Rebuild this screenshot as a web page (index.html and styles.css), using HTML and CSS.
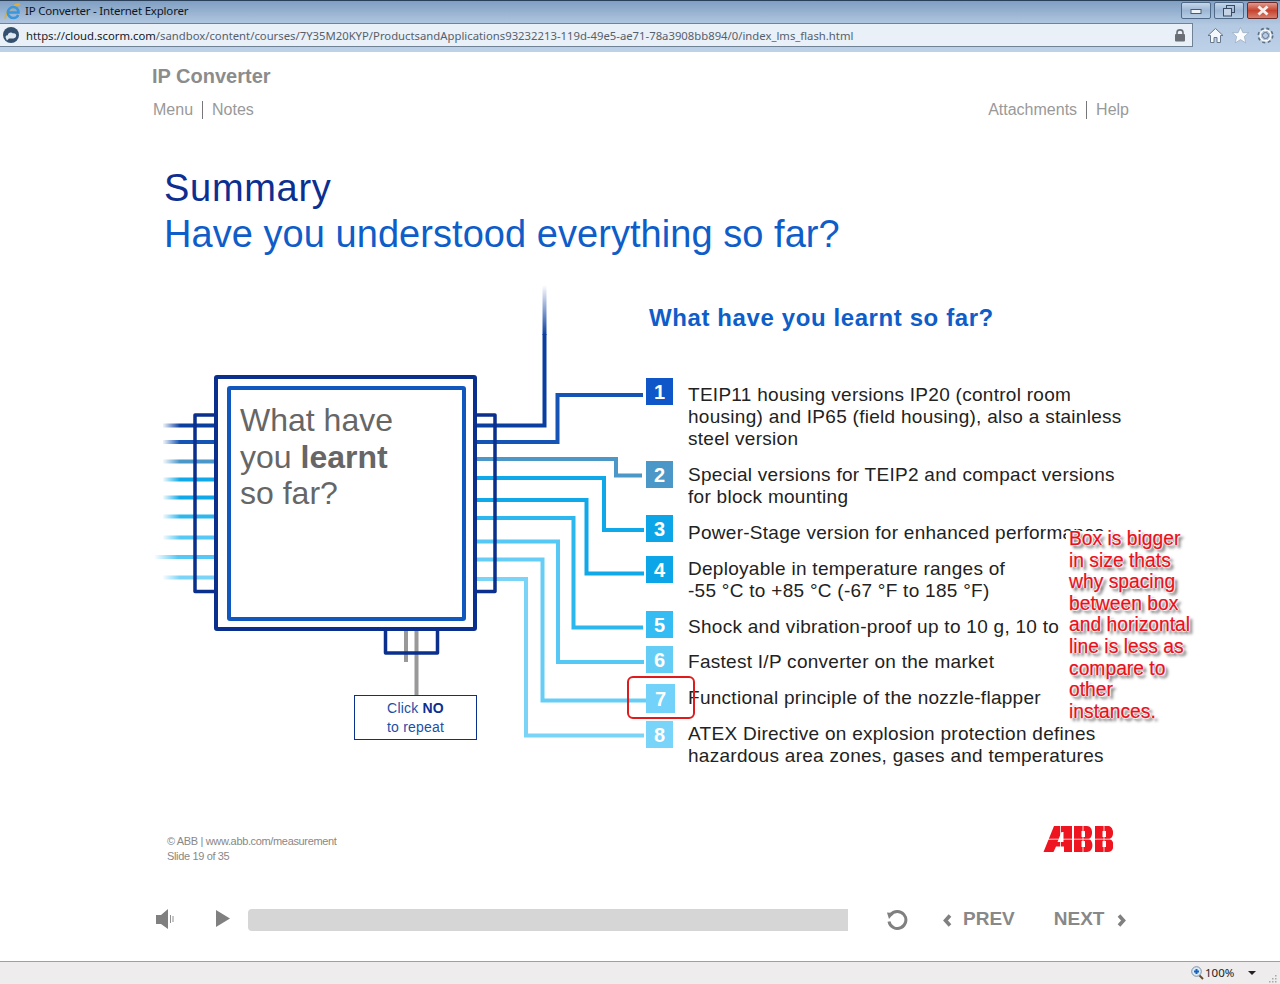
FILE: index.html
```html
<!DOCTYPE html>
<html lang="en">
<head>
    <meta charset="UTF-8">
    <meta name="viewport" content="width=device-width, initial-scale=1.0">
    <title>IP Converter - Internet Explorer</title>
    <link rel="stylesheet" href="styles.css">
</head>
<body>
    <header class="browser">
        <div class="titlebar">
            <svg class="ie-logo" width="18" height="18" viewBox="0 0 18 18">
                <path d="M1.5 15.5C0.5 11 8 2.5 16 1.5C13 0.5 11 2 10 3" fill="none" stroke="#e3ac34" stroke-width="1.8"/>
                <path d="M4.5 9.5H14.5C14.5 6 12 4 9.5 4C6.5 4 3.8 6.5 3.8 9.5C3.8 12.8 6.5 15 9.5 15C11.6 15 13.3 14 14.2 12" fill="none" stroke="#3b97dc" stroke-width="2.6"/>
            </svg>
            <span class="window-title">IP Converter - Internet Explorer</span>
            <div class="window-buttons">
                <span class="win-btn">
                    <svg width="12" height="8" viewBox="0 0 12 8"><rect x="1" y="2.5" width="10" height="4" fill="#eef3f9" stroke="#4a5a70"/></svg>
                </span>
                <span class="win-btn">
                    <svg width="14" height="12" viewBox="0 0 14 12"><rect x="4.5" y="0.5" width="8" height="7" fill="none" stroke="#3a4a60"/><rect x="1.5" y="3.5" width="8" height="7.5" fill="#c4d4e6" stroke="#3a4a60"/></svg>
                </span>
                <span class="win-btn win-close">
                    <svg width="14" height="11" viewBox="0 0 14 11"><path d="M2.5 1.5L11.5 9.5M11.5 1.5L2.5 9.5" stroke="#f6f0ee" stroke-width="3"/></svg>
                </span>
            </div>
        </div>
        <div class="addressbar">
            <div class="address-field">
                <svg class="site-icon" width="18" height="18" viewBox="0 0 18 18">
                    <circle cx="9" cy="9" r="8" fill="#33506e"/>
                    <path d="M4 12.5C2.8 10.8 4 9 5.8 9.2C6 6.5 9.5 5.5 11 7.5C13 6.8 14.8 8.5 14 10.5C13.6 12 12 12.5 10.5 12.5H7L5 14.5Z" fill="#dfe9f3"/>
                </svg>
                <span class="url"><span class="url-scheme">https://</span><span class="url-host">cloud.scorm.com</span>/sandbox/content/courses/7Y35M20KYP/ProductsandApplications93232213-119d-49e5-ae71-78a3908bb894/0/index_lms_flash.html</span>
                <svg class="lock" width="12" height="14" viewBox="0 0 12 14">
                    <path d="M3 7V4.5C3 1 9 1 9 4.5V7" fill="none" stroke="#6a6f75" stroke-width="1.6"/>
                    <rect x="1" y="6" width="10" height="7.5" rx="1" fill="#6a6f75"/>
                </svg>
            </div>
            <div class="tools">
                <svg width="17" height="17" viewBox="0 0 17 17"><path d="M8.5 1.5L16 8.5H13.5V15.5H10V10.5H7V15.5H3.5V8.5H1Z" fill="#f5f8fb" stroke="#66788c"/></svg>
                <svg width="17" height="17" viewBox="0 0 17 17"><path d="M8.5 0.5L10.9 5.7H16.6L12.3 9.6L13.7 15.8L8.5 12.6L3.3 15.8L4.7 9.6L0.4 5.7H6.1Z" fill="#fbfcfe" stroke="#8ea0b4" stroke-width="0.6"/></svg>
                <svg width="17" height="17" viewBox="0 0 17 17"><circle cx="8.5" cy="8.5" r="6.2" fill="none" stroke="#5e7085" stroke-width="3.6" stroke-dasharray="2.6 2.27"/><circle cx="8.5" cy="8.5" r="5.4" fill="none" stroke="#f5f8fb" stroke-width="1.8"/><circle cx="8.5" cy="8.5" r="3" fill="none" stroke="#5e7085"/></svg>
            </div>
        </div>
    </header>

    <main class="stage">
        <h1 class="course-title">IP Converter</h1>
        <nav class="course-nav">
            <div><a>Menu</a><i class="sep"></i><a>Notes</a></div>
            <div><a>Attachments</a><i class="sep"></i><a>Help</a></div>
        </nav>

        <div class="slide-head">
            <h2 class="slide-title">Summary</h2>
            <h3 class="slide-sub">Have you understood everything so far?</h3>
        </div>

        <!-- wires and chip, drawn in page coordinates -->
        <svg class="wires" width="1280" height="909" viewBox="0 52 1280 909" fill="none">
            <defs>
                <linearGradient id="fadeUp" gradientUnits="userSpaceOnUse" x1="0" y1="285" x2="0" y2="335">
                    <stop offset="0" stop-color="#0b3f9f" stop-opacity="0"/>
                    <stop offset="1" stop-color="#0b3f9f"/>
                </linearGradient>
                <linearGradient id="fadeLeft" gradientUnits="userSpaceOnUse" x1="162" y1="0" x2="180" y2="0">
                    <stop offset="0" stop-color="#fff" stop-opacity="1"/>
                    <stop offset="1" stop-color="#fff" stop-opacity="0"/>
                </linearGradient>
                <linearGradient id="fadeLong" gradientUnits="userSpaceOnUse" x1="154" y1="0" x2="178" y2="0">
                    <stop offset="0" stop-color="#55c8f5" stop-opacity="0"/>
                    <stop offset="1" stop-color="#55c8f5"/>
                </linearGradient>
            </defs>

            <g stroke-width="4">
                <path d="M163 425.5H214" stroke="#0b3f9f"/>
                <path d="M163 442H214" stroke="#1554b5"/>
                <path d="M163 461.5H214" stroke="#4a97c8"/>
                <path d="M163 479.5H214" stroke="#0fa8e8"/>
                <path d="M163 497.5H214" stroke="#0fa8e8"/>
                <path d="M163 516.5H214" stroke="#2cb8ee"/>
                <path d="M163 537.5H214" stroke="#55c8f5"/>
                <path d="M163 577.5H214" stroke="#7ad4f8"/>
            </g>
            <rect x="160" y="415" width="20" height="170" fill="url(#fadeLeft)"/>
            <path d="M154 557H214" stroke="url(#fadeLong)" stroke-width="4"/>

            <g stroke-width="4">
                <path d="M477 425.5H544.5V334" stroke="#0b3f9f"/>
                <path d="M544.5 285V335" stroke="url(#fadeUp)"/>
                <path d="M477 442H557.5V395H643" stroke="#1554b5"/>
                <path d="M477 459H616V475.5H642" stroke="#4a97c8"/>
                <path d="M477 478H604V530H644" stroke="#0fa8e8"/>
                <path d="M477 500H586.5V573.5H644" stroke="#0fa8e8"/>
                <path d="M477 518H573.5V627.5H643" stroke="#2cb8ee"/>
                <path d="M477 541.5H558V662H644" stroke="#55c8f5"/>
                <path d="M477 559.5H542.5V700.5H646" stroke="#66cdf7"/>
                <path d="M477 579H526V735.5H644" stroke="#7ad4f8"/>
            </g>

            <path d="M406 631V662M416.5 631V695" stroke="#999" stroke-width="4"/>

            <g stroke="#0a2f8c" stroke-width="3.5" stroke-linejoin="round">
                <path d="M214 415H195V591.5H214"/>
                <path d="M477 415H495V591.5H477"/>
                <path d="M385.5 631V653H437.5V631"/>
            </g>
            <rect x="216" y="377" width="259" height="252" fill="#fff" fill-opacity="0" stroke="#0a2f8c" stroke-width="4" rx="1"/>
            <rect x="229" y="388" width="235" height="231" stroke="#1058be" stroke-width="4" rx="1"/>
        </svg>

        <div class="chip-label">What have<br>you <b>learnt</b><br>so far?</div>
        <div class="repeat-box">Click <b>NO</b><br>to repeat</div>

        <section class="learnt">
            <h3 class="learnt-head">What have you learnt so far?</h3>
            <ol class="points">
                <li class="point"><span class="num n1">1</span><p>TEIP11 housing versions IP20 (control room<br>housing) and IP65 (field housing), also a stainless<br>steel version</p></li>
                <li class="point"><span class="num n2">2</span><p>Special versions for TEIP2 and compact versions<br>for block mounting</p></li>
                <li class="point"><span class="num n3">3</span><p>Power-Stage version for enhanced performance</p></li>
                <li class="point"><span class="num n4">4</span><p>Deployable in temperature ranges of<br>-55 °C to +85 °C (-67 °F to 185 °F)</p></li>
                <li class="point"><span class="num n5">5</span><p>Shock and vibration-proof up to 10 g, 10 to</p></li>
                <li class="point tight"><span class="num n6">6</span><p>Fastest I/P converter on the market</p></li>
                <li class="point"><span class="num n7">7</span><p>Functional principle of the nozzle-flapper</p></li>
                <li class="point"><span class="num n8">8</span><p>ATEX Directive on explosion protection defines<br>hazardous area zones, gases and temperatures</p></li>
            </ol>
        </section>

        <div class="mark"></div>
        <div class="note">Box is bigger<br>in size thats<br>why spacing<br>between box<br>and horizontal<br>line is less as<br>compare to<br>other<br>instances.</div>

        <div class="slide-foot">
            <div class="legal">© ABB | www.abb.com/measurement<br>Slide 19 of 35</div>
            <svg class="abb" width="70" height="28" viewBox="1043 825 70 28">
                <g fill="#ee1520" fill-rule="evenodd">
                    <path d="M1043.5 852L1054 826H1072V852H1064V846.5H1056L1053.5 852ZM1057.5 842H1063.5V832H1061.5Z"/>
                    <path d="M1074 826H1087C1093.5 826 1093.5 838 1088.5 839C1094 840 1094 852 1087 852H1074ZM1081.5 831V837H1085V831ZM1081.5 841V847H1085V841Z"/>
                    <path d="M1095 826H1108C1114.5 826 1114.5 838 1109.5 839C1115 840 1115 852 1108 852H1095ZM1102.5 831V837H1106V831ZM1102.5 841V847H1106V841Z"/>
                </g>
                <path d="M1043 839.2H1113M1060.5 825V853M1083 825V853M1104 825V853" stroke="#fff" stroke-width="0.8"/>
            </svg>
        </div>

        <div class="player">
            <svg class="p-sound" width="18" height="20" viewBox="0 0 18 20">
                <path d="M0 6H5L12 0V20L5 15H0Z" fill="#808080"/>
                <path d="M14.5 6V14M17 7V13" stroke="#909090"/>
            </svg>
            <svg class="p-play" width="14" height="17" viewBox="0 0 14 17"><path d="M0 0L14 8.5L0 17Z" fill="#808080"/></svg>
            <div class="p-bar"></div>
            <svg class="p-replay" width="22" height="22" viewBox="0 0 22 22">
                <path d="M4.5 6A8.5 8.5 0 1 1 3 12.5" fill="none" stroke="#808080" stroke-width="3"/>
                <path d="M1 3.5L8 4L3 10Z" fill="#808080"/>
            </svg>
            <svg class="p-chev-l" width="9" height="13" viewBox="0 0 9 13"><path d="M7 1.5L2.5 6.5L7 11.5" fill="none" stroke="#808080" stroke-width="3.6"/></svg>
            <span class="p-text p-prev">PREV</span>
            <span class="p-text p-next">NEXT</span>
            <svg class="p-chev-r" width="9" height="13" viewBox="0 0 9 13"><path d="M2 1.5L6.5 6.5L2 11.5" fill="none" stroke="#808080" stroke-width="3.6"/></svg>
        </div>
    </main>

    <footer class="statusbar">
        <svg width="13" height="14" viewBox="0 0 13 14">
            <path d="M8 9L12 13" stroke="#6b4a2a" stroke-width="2"/>
            <circle cx="5.5" cy="5.5" r="4.8" fill="#dbe9f5" stroke="#7d93a8"/>
            <path d="M3 5.5H8M5.5 3V8" stroke="#1a62b8" stroke-width="2"/>
        </svg>
        <span class="zoom">100%</span>
        <i class="zoom-arrow"></i>
        <svg class="grip" width="9" height="9" viewBox="0 0 9 9" fill="#a9a9a9">
            <rect x="6" y="0" width="1.5" height="1.5"/><rect x="3" y="3" width="1.5" height="1.5"/><rect x="6" y="3" width="1.5" height="1.5"/>
            <rect x="0" y="6" width="1.5" height="1.5"/><rect x="3" y="6" width="1.5" height="1.5"/><rect x="6" y="6" width="1.5" height="1.5"/>
        </svg>
    </footer>
</body>
</html>
```

FILE: styles.css
```css
* {
    box-sizing: border-box;
}
body {
    margin: 0;
    width: 1280px;
    height: 984px;
    overflow: hidden;
    display: flex;
    flex-direction: column;
    font-family: "Liberation Sans", Arial, sans-serif;
    background-color: #fff;
}
h1, h2, h3, p, ol {
    margin: 0;
    padding: 0;
}

/* browser chrome */
.browser {
    height: 52px;
    flex: none;
    border-top: 1px solid #2a3f58;
    background: linear-gradient(#7f9fc2 0, #b4c9e2 24px, #bdd1e8 100%);
}
.titlebar {
    height: 22px;
    display: flex;
    align-items: center;
    padding-left: 4px;
}
.ie-logo {
    margin-right: 3px;
}
.window-title {
    margin-bottom: 3px;
    font: 11.5px "Noto Sans", sans-serif;
    letter-spacing: -0.2px;
    color: #10161e;
}
.window-buttons {
    margin-left: auto;
    display: flex;
    gap: 3px;
    padding-right: 2px;
    align-self: flex-start;
    padding-top: 1px;
}
.win-btn {
    width: 30px;
    height: 17px;
    display: flex;
    align-items: center;
    justify-content: center;
    border: 1px solid #4f6a88;
    border-radius: 2px;
    background: linear-gradient(#c4d6ea, #9db7d4 50%, #b7cde4);
}
.win-close {
    width: 31px;
    border-color: #6b2b2b;
    background: linear-gradient(#e09a8c, #c6432f 50%, #d77f6c);
}
.addressbar {
    height: 29px;
    display: flex;
    align-items: flex-start;
}
.address-field {
    width: 1193px;
    height: 24px;
    display: flex;
    align-items: center;
    padding: 0 6px 0 2px;
    background-color: #e9f0f8;
    border: 1px solid #6f8296;
    border-left: none;
}
.site-icon {
    margin-right: 6px;
}
.url {
    font: 11.3px "Noto Sans", sans-serif;
    color: #56606c;
    white-space: nowrap;
}
.url-host {
    color: #14181d;
}
.url-scheme {
    color: #22272d;
}
.lock {
    margin-left: auto;
}
.tools {
    display: flex;
    gap: 8px;
    padding: 4px 0 0 14px;
}

/* slide */
.stage {
    position: relative;
    flex: 1;
    padding-top: 12px;
    background-color: #fff;
}
.course-title {
    margin-left: 152px;
    font-size: 20px;
    line-height: 24px;
    color: #8c8c8c;
}
.course-nav {
    display: flex;
    justify-content: space-between;
    margin: 12px 151px 0 153px;
    font-size: 16px;
    line-height: 20px;
    color: #999;
}
.course-nav div {
    display: flex;
    align-items: center;
}
.sep {
    width: 1px;
    height: 18px;
    margin: 0 9px;
    background-color: #777;
}
.slide-head {
    margin: 45px 0 0 164px;
    position: relative;
}
.slide-title, .slide-sub {
    font-size: 38px;
    line-height: 46px;
    font-weight: normal;
}
.slide-title {
    letter-spacing: 0.7px;
    color: #0c2f90;
}
.slide-sub {
    letter-spacing: 0.05px;
    color: #0e5dc8;
}
.wires {
    position: absolute;
    left: 0;
    top: 0;
}
.chip-label {
    position: absolute;
    left: 240px;
    top: 350px;
    font-size: 32px;
    line-height: 36.5px;
    color: #666;
}
.repeat-box {
    position: absolute;
    left: 354px;
    top: 643px;
    width: 123px;
    height: 45px;
    border: 1px solid #0a2f8c;
    background-color: #fff;
    text-align: center;
    font-size: 14px;
    line-height: 19px;
    letter-spacing: 0.2px;
    padding-top: 3px;
    color: #1b4fa8;
}
.repeat-box b {
    color: #0c2f90;
}

.learnt {
    position: relative;
    margin: 46px 0 0 646px;
}
.learnt-head {
    margin-left: 3px;
    font-size: 24px;
    line-height: 30px;
    letter-spacing: 0.6px;
    color: #0e5dc8;
}
.points {
    list-style: none;
    margin-top: 51px;
    display: flex;
    flex-direction: column;
    gap: 14px;
}
.point {
    display: flex;
    align-items: flex-start;
    font-size: 19px;
    line-height: 22px;
    letter-spacing: 0.28px;
    color: #222;
}
.tight {
    margin-top: -1px;
}
.num {
    flex: none;
    width: 27px;
    height: 27px;
    margin-right: 15px;
    margin-bottom: -20px;
    text-align: center;
    font-size: 20px;
    font-weight: bold;
    line-height: 29px;
    letter-spacing: 0;
    color: #fff;
}
.n1 { margin-top: -6px; background-color: #0f56c8; }
.n2 { margin-top: -3px; background-color: #4a97c8; }
.n3 { margin-top: -7px; background-color: #0ca6e8; }
.n4 { margin-top: -2px; background-color: #0ca6e8; }
.n5 { margin-top: -5px; background-color: #35bcf2; }
.n6 { margin-top: -5px; background-color: #64cdf6; }
.n7 { margin-top: -3px; width: 29px; height: 29px; line-height: 31px; margin-right: 13px; background-color: #72d2f9; }
.n8 { margin-top: -2px; background-color: #78d4f8; }

.mark {
    position: absolute;
    left: 627px;
    top: 624px;
    width: 68px;
    height: 43px;
    border: 2px solid #e01b1b;
    border-radius: 6px;
}
/* the white starts a little under the top, so the line behind it still peeks out */
.note {
    position: absolute;
    left: 1066px;
    top: 476px;
    width: 130px;
    padding-left: 3px;
    background: linear-gradient(transparent 3px, #fff 3px);
    font-size: 19.3px;
    line-height: 21.6px;
    color: #e8101a;
    -webkit-text-stroke: 0.25px #e8101a;
    text-shadow: 1px 0 #fff, -1px 0 #fff, 0 1px #fff, 0 -1px #fff, 3px 3px 3px #555;
}

.slide-foot {
    display: flex;
    justify-content: space-between;
    margin: 67px 167px 0 167px;
}
.legal {
    font-size: 11px;
    line-height: 15px;
    letter-spacing: -0.35px;
    color: #888;
}
.abb {
    margin-top: -9px;
}
.player {
    display: flex;
    align-items: center;
    height: 22px;
    margin-top: 45px;
    padding-left: 156px;
}
.p-sound {
    margin-bottom: 2px;
}
.p-play {
    margin-left: 42px;
    margin-bottom: 3px;
}
.p-bar {
    width: 600px;
    height: 22px;
    margin-left: 18px;
    background-color: #d6d6d6;
    border-radius: 4px 0 0 4px;
}
.p-replay {
    margin-left: 38px;
    margin-bottom: 1px;
}
.p-chev-l {
    margin-left: 35px;
}
.p-text {
    margin-bottom: 3px;
    font-size: 19px;
    font-weight: bold;
    line-height: 22px;
    color: #888;
}
.p-prev {
    margin-left: 11px;
}
.p-next {
    margin-left: 39px;
}
.p-chev-r {
    margin-left: 13px;
}

/* status bar */
.statusbar {
    height: 23px;
    flex: none;
    display: flex;
    align-items: center;
    padding-left: 1191px;
    border-top: 1px solid #a0a0a0;
    background-color: #eeecec;
}
.zoom {
    margin-left: 1px;
    margin-bottom: 1px;
    font: 11.5px "Noto Sans", sans-serif;
    color: #222;
}
.zoom-arrow {
    margin-left: 14px;
    border-top: 4px solid #222;
    border-left: 4px solid transparent;
    border-right: 4px solid transparent;
}
.grip {
    margin-left: 13px;
    align-self: flex-end;
}
```
